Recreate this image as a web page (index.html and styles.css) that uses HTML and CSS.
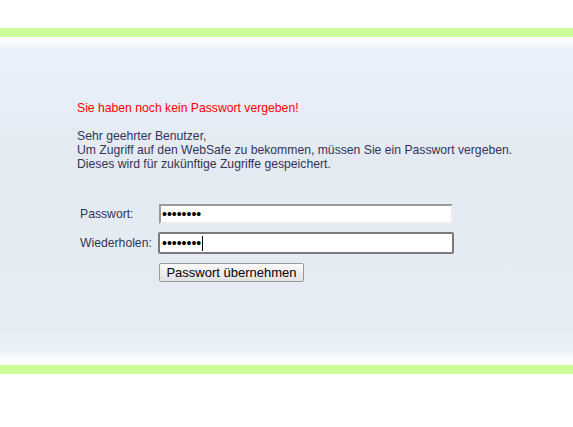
FILE: index.html
```html
<!DOCTYPE html>
<html>
<head>
<meta charset="utf-8">
<link rel="stylesheet" href="styles.css">
</head>
<body>
<div class="top-space"></div>
<div class="bar"></div>
<div class="main">
  <div class="content">
    <p class="warn">Sie haben noch kein Passwort vergeben!</p>
    <p class="text">Sehr geehrter Benutzer,<br>Um Zugriff auf den WebSafe zu bekommen, müssen Sie ein Passwort vergeben.<br>Dieses wird für zukünftige Zugriffe gespeichert.</p>
    <form class="form">
      <div class="row row1">
        <label class="label">Passwort:</label>
        <input class="field" type="password" value="12345678">
      </div>
      <div class="row row2">
        <label class="label">Wiederholen:</label>
        <span class="field-wrap">
          <input class="field focused" type="password" value="12345678">
          <span class="caret"></span>
        </span>
      </div>
      <div class="row row3">
        <span class="label"></span>
        <button type="button" class="btn">Passwort übernehmen</button>
      </div>
    </form>
  </div>
</div>
<div class="bar"></div>
</body>
</html>
```
FILE: styles.css
```css
html, body {
  margin: 0;
  padding: 0;
  background: #ffffff;
  font-family: "Liberation Sans", Arial, sans-serif;
}
.top-space {
  height: 28px;
}
.bar {
  height: 9px;
  background: #ccff99;
}
.main {
  height: 328px;
  background: linear-gradient(to bottom, #ffffff 0px, #eaf1fb 14px, #e4eaf2 120px, #e6ecf4 290px, #ecf2fa 312px, #ffffff 328px);
  box-sizing: border-box;
  padding: 64px 0 0 77px;
}
.content {
  font-size: 12.2px;
  line-height: 14px;
  color: #333355;
}
.warn {
  margin: 0 0 14px 0;
  color: #ff0000;
}
.text {
  margin: 0;
}
.form {
  margin-top: 33px;
  display: flex;
  flex-direction: column;
}
.row {
  display: flex;
  align-items: center;
}
.row1 {
  height: 20px;
}
.row2 {
  height: 22px;
  margin-top: 8px;
}
.row3 {
  height: 19px;
  margin-top: 9px;
}
.label {
  width: 82px;
  padding-left: 3px;
  box-sizing: border-box;
  color: #333355;
  font-size: 12.2px;
}
.field {
  width: 294px;
  height: 20px;
  box-sizing: border-box;
  border-style: solid;
  border-width: 2px;
  border-top-color: #9a9a9a;
  border-left-color: #9a9a9a;
  border-right-color: #ececec;
  border-bottom-color: #ececec;
  background: #ffffff;
  padding: 0 1px;
  font-family: "Liberation Sans", Arial, sans-serif;
  font-size: 14px;
  color: #000;
  outline: none;
}
.field-wrap {
  position: relative;
  display: block;
  margin-left: -1px;
  height: 22px;
}
.focused {
  width: 296px;
  height: 22px;
  border: 2px solid #7a7a7a;
  border-radius: 2px;
  padding: 0 2px;
}
.caret {
  position: absolute;
  left: 44px;
  top: 4px;
  width: 1px;
  height: 15px;
  background: #000;
}
.btn {
  width: 145px;
  height: 19px;
  padding: 0;
  border: 1px solid #9a9a9a;
  border-radius: 2px;
  background: linear-gradient(to bottom, #fafafa, #e2e2e2);
  font-family: "Liberation Sans", Arial, sans-serif;
  font-size: 13px;
  color: #000;
  line-height: 17px;
}
```
